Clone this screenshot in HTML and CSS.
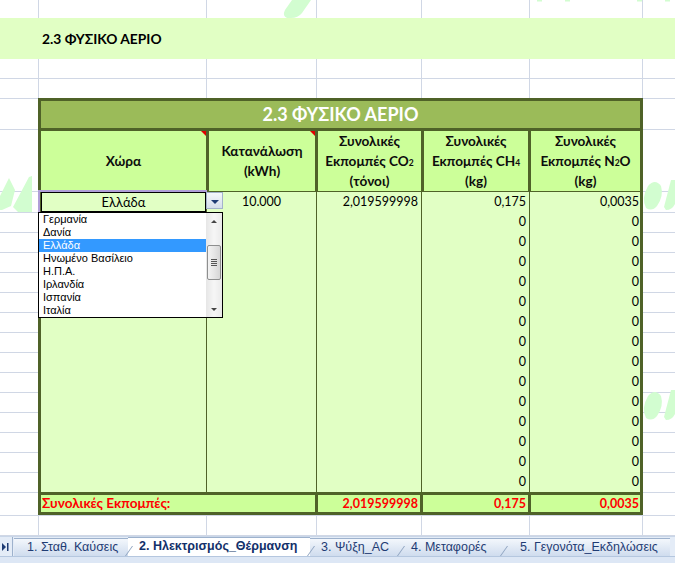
FILE: index.html
```html
<!DOCTYPE html>
<html lang="el">
<head>
<meta charset="utf-8">
<title>2.3 ΦΥΣΙΚΟ ΑΕΡΙΟ</title>
<link rel="stylesheet" href="styles.css">
</head>
<body>
<div class="sheet">
  <svg class="wm" width="675" height="536" viewBox="0 0 675 536" aria-hidden="true">
    <path d="M292 0 L311 0 L302 13 Q298 18 291 18 L287 18 Q282 16 285 10 Z"/>
    <rect x="537" y="0" width="5" height="1.5"/>
    <rect x="565" y="0" width="5" height="1.5"/>
    <rect x="637" y="0" width="5" height="1.5"/>
    <rect x="665" y="0" width="5" height="1.5"/>
    <path d="M0 196 L9 178 L15 190 L11 206 L2 210 L0 210 Z"/>
    <path d="M13 207 L29 177 L32 176 L32 212 L18 212 Z"/>
    <path d="M646 208 Q641 198 648 186 Q655 178 661 186 Q664 196 657 206 Q652 212 646 208 Z"/>
    <path d="M664 207 L671 180 L675 180 L675 204 Q672 210 666 210 Z"/>
    <path d="M646 418 Q641 408 648 396 Q655 388 661 396 Q664 406 657 416 Q652 422 646 418 Z"/>
    <path d="M664 417 L671 390 L675 390 L675 414 Q672 420 666 420 Z"/>
  </svg>

  <div class="band"><span class="band-title">2.3 ΦΥΣΙΚΟ ΑΕΡΙΟ</span></div>
  <div class="band-gap"></div>

  <div class="table-wrap">
    <div class="xtable">
      <div class="title">2.3 ΦΥΣΙΚΟ ΑΕΡΙΟ</div>
      <div class="head">
        <div class="hc note"><span>Χώρα</span></div>
        <div class="hc note"><span>Κατανάλωση<br>(kWh)</span></div>
        <div class="hc"><span>Συνολικές<br>Εκπομπές CO<sub>2</sub><br>(τόνοι)</span></div>
        <div class="hc"><span>Συνολικές<br>Εκπομπές CH<sub>4</sub><br>(kg)</span></div>
        <div class="hc"><span>Συνολικές<br>Εκπομπές N<sub>2</sub>O<br>(kg)</span></div>
      </div>
      <div class="data">
        <div class="dc dc-country"><span class="sel">Ελλάδα</span></div>
        <div class="dc dc-center"><span>10.000</span></div>
        <div class="dc"><span>2,019599998</span></div>
        <div class="dc">
          <span>0,175</span><span>0</span><span>0</span><span>0</span><span>0</span>
          <span>0</span><span>0</span><span>0</span><span>0</span><span>0</span>
          <span>0</span><span>0</span><span>0</span><span>0</span><span>0</span>
        </div>
        <div class="dc dc-last">
          <span>0,0035</span><span>0</span><span>0</span><span>0</span><span>0</span>
          <span>0</span><span>0</span><span>0</span><span>0</span><span>0</span>
          <span>0</span><span>0</span><span>0</span><span>0</span><span>0</span>
        </div>
      </div>
      <div class="total">
        <div class="tc tc-label">Συνολικές Εκπομπές:</div>
        <div class="tc">2,019599998</div>
        <div class="tc">0,175</div>
        <div class="tc tc-last">0,0035</div>
      </div>
    </div>

    <div class="sel-top"></div>
    <div class="sel-left"></div>
    <div class="dd-btn"><span class="dd-tri"></span></div>

    <div class="dd">
      <ul class="dd-items">
        <li>Γερμανία</li>
        <li>Δανία</li>
        <li class="on">Ελλάδα</li>
        <li>Ηνωμένο Βασίλειο</li>
        <li>Η.Π.Α.</li>
        <li>Ιρλανδία</li>
        <li>Ισπανία</li>
        <li>Ιταλία</li>
      </ul>
      <div class="dd-scroll">
        <div class="sb-btn"><span class="tri-up"></span></div>
        <div class="sb-track">
          <div class="sb-thumb"><i></i><i></i><i></i><i></i></div>
        </div>
        <div class="sb-btn"><span class="tri-down"></span></div>
      </div>
    </div>
  </div>
</div>

<div class="tabbar">
  <div class="tabs">
    <div class="nav">
      <svg width="9" height="8" viewBox="0 0 9 8" aria-hidden="true"><path d="M1 0 L5 4 L1 8 Z" fill="#1f3c74"/><rect x="6" y="0" width="1.5" height="8" fill="#1f3c74"/></svg>
    </div>
    <div class="tab t1">1. Σταθ. Καύσεις</div>
    <div class="tab active t2">2. Ηλεκτρισμός_Θέρμανση</div>
    <div class="tab t3">3. Ψύξη_AC</div>
    <div class="tab t4">4. Μεταφορές</div>
    <div class="tab t5">5. Γεγονότα_Εκδηλώσεις</div>
  </div>
  <div class="strip"></div>
</div>
</body>
</html>
```

FILE: styles.css
```css
* { box-sizing: border-box; }
html, body { margin: 0; padding: 0; }
body {
  width: 675px;
  height: 563px;
  overflow: hidden;
  background: #fff;
  font-family: Lato, "Noto Sans", "Liberation Sans", sans-serif;
  color: #000;
}

.sheet {
  --g: #d0d7e5;
  position: relative;
  height: 536px;
  overflow: hidden;
  padding-top: 18px;
  background:
    linear-gradient(var(--g), var(--g)) 38px 0 / 1px 100% no-repeat,
    linear-gradient(var(--g), var(--g)) 206px 0 / 1px 100% no-repeat,
    linear-gradient(var(--g), var(--g)) 316px 0 / 1px 100% no-repeat,
    linear-gradient(var(--g), var(--g)) 421px 0 / 1px 100% no-repeat,
    linear-gradient(var(--g), var(--g)) 529px 0 / 1px 100% no-repeat,
    linear-gradient(var(--g), var(--g)) 642px 0 / 1px 100% no-repeat,
    linear-gradient(var(--g), var(--g)) 0 78px / 100% 1px no-repeat,
    linear-gradient(var(--g), var(--g)) 0 98px / 100% 1px no-repeat,
    linear-gradient(var(--g), var(--g)) 0 129px / 100% 1px no-repeat,
    linear-gradient(var(--g), var(--g)) 0 191px / 100% 1px no-repeat,
    repeating-linear-gradient(180deg, var(--g) 0 1px, transparent 1px 20px) 0 212px / 100% 281px no-repeat,
    linear-gradient(var(--g), var(--g)) 0 515px / 100% 1px no-repeat,
    linear-gradient(var(--g), var(--g)) 0 535px / 100% 1px no-repeat,
    #fff;
}

.wm {
  position: absolute;
  left: 0;
  top: 0;
  z-index: 0;
  fill: #d2fdd0;
}

.band {
  position: relative;
  z-index: 1;
  height: 41px;
  background: #e1ffc4;
  display: flex;
  align-items: center;
  padding-left: 42px;
}
.band-title {
  font-weight: 700;
  font-size: 13.8px;
}
.band-gap { height: 39px; }

.table-wrap {
  position: relative;
  z-index: 1;
  margin-left: 38px;
  width: 605px;
}

.xtable {
  background: #4f6228;
  padding: 3px;
  display: flex;
  flex-direction: column;
  gap: 3px;
}

.title {
  height: 27px;
  background: #9bbb59;
  color: #fff;
  font-weight: 700;
  font-size: 18px;
  line-height: 27px;
  text-align: center;
}

.head {
  display: grid;
  grid-template-columns: 165px 106px 103px 104px 109px;
  column-gap: 3px;
  height: 58px;
}
.hc {
  position: relative;
  background: #ccff99;
  display: flex;
  align-items: center;
  justify-content: center;
  text-align: center;
  font-weight: 700;
  font-size: 13.6px;
  line-height: 20px;
  color: #0d0d0d;
}
.hc sub {
  font-size: 8.5px;
  line-height: 0;
  vertical-align: baseline;
  position: relative;
  top: 0;
}
.note::after {
  content: "";
  position: absolute;
  top: 0;
  right: 0;
  border-top: 5px solid #e00000;
  border-left: 5px solid transparent;
}

.data {
  display: grid;
  grid-template-columns: 165px 109px 104px 107px 110px;
  column-gap: 1px;
  height: 300px;
}
.dc {
  background: #e1ffc4;
  display: flex;
  flex-direction: column;
  font-size: 12.5px;
  text-align: right;
}
.dc span {
  height: 20px;
  line-height: 20px;
  padding-right: 3px;
}
.dc-last span { padding-right: 1px; }
.dc-center span { text-align: center; padding-right: 0; }
.dc-country .sel {
  text-align: center;
  padding-right: 0;
  box-shadow: inset 0 0 0 1px #000;
  font-size: 13px;
}

.total {
  display: grid;
  grid-template-columns: 274px 102px 105px 109px;
  column-gap: 3px;
  height: 17px;
}
.tc {
  background: #ccff99;
  color: #ff0000;
  font-weight: 700;
  font-size: 12.5px;
  line-height: 17px;
  text-align: right;
  padding-right: 2px;
}
.tc-last { padding-right: 1px; }
.tc-label { text-align: left; padding-left: 1px; font-size: 13.6px; }

.sel-top {
  position: absolute;
  left: 0;
  top: 92px;
  width: 169px;
  height: 2px;
  background: #b09fd8;
}
.sel-left {
  position: absolute;
  left: 0;
  top: 92px;
  width: 2px;
  height: 22px;
  background: #b09fd8;
}

.dd-btn {
  position: absolute;
  left: 168px;
  top: 94px;
  width: 17px;
  height: 17px;
  border: 1px solid #a3b3cb;
  background: linear-gradient(#f4f7fb, #d5deeb);
  display: flex;
  align-items: center;
  justify-content: center;
}
.dd-tri {
  width: 0;
  height: 0;
  border-left: 4px solid transparent;
  border-right: 4px solid transparent;
  border-top: 4px solid #1f3c74;
  margin-top: 2px;
}

.dd {
  position: absolute;
  left: 0;
  top: 114px;
  width: 185px;
  height: 106px;
  border: 1px solid #000;
  background: #fff;
  display: flex;
}
.dd-items {
  list-style: none;
  margin: 0;
  padding: 0;
  flex: 1;
  font-family: "Liberation Sans", Arial, sans-serif;
  font-size: 11px;
}
.dd-items li {
  height: 13px;
  line-height: 13px;
  padding-left: 4px;
  white-space: nowrap;
}
.dd-items li.on {
  background: #3399ff;
  color: #fff;
}
.dd-scroll {
  width: 16px;
  display: flex;
  flex-direction: column;
  background: linear-gradient(90deg, #e6e6e6, #f6f6f6 50%, #eaeaea);
}
.sb-btn {
  height: 16px;
  display: flex;
  align-items: center;
  justify-content: center;
}
.tri-up {
  border-left: 3px solid transparent;
  border-right: 3px solid transparent;
  border-bottom: 3px solid #444;
}
.tri-down {
  border-left: 3px solid transparent;
  border-right: 3px solid transparent;
  border-top: 3px solid #444;
}
.sb-track {
  flex: 1;
  padding-top: 16px;
}
.sb-thumb {
  height: 35px;
  margin: 0 1px;
  border: 1px solid #8e8f8f;
  border-radius: 2px;
  background: linear-gradient(90deg, #f3f3f3, #e6e6e6 50%, #d6d6d6);
  display: flex;
  flex-direction: column;
  align-items: center;
  justify-content: center;
  gap: 1px;
}
.sb-thumb i {
  display: block;
  width: 6px;
  height: 1px;
  background: #555;
}

.tabbar {
  height: 27px;
  display: flex;
  flex-direction: column;
  background: #e4ecf7;
}
.tabs {
  height: 20px;
  display: flex;
  align-items: flex-end;
  border-top: 1px solid #c9d6e8;
}
.nav {
  width: 13px;
  height: 19px;
  display: flex;
  align-items: center;
  justify-content: flex-start;
  border-right: 1px solid #9eb2cd;
  padding-left: 1px;
}
.tab {
  position: relative;
  flex: none;
  height: 18px;
  line-height: 17px;
  font-family: "Liberation Sans", Arial, sans-serif;
  font-size: 12.5px;
  color: #1f3c74;
  background: linear-gradient(#f3f7fc, #cfdcee);
  border-top: 1px solid #9eb2cd;
  white-space: nowrap;
}
.tab::before {
  content: "";
  position: absolute;
  left: -3px;
  bottom: 0;
  width: 1px;
  height: 10px;
  background: #8ea3c0;
  transform: skewX(-35deg);
  transform-origin: bottom;
}
.t1 { margin-left: 1px; width: 114px; padding-left: 13px; }
.t1::before { display: none; }
.active {
  background: #fff;
  color: #12306a;
  font-weight: 700;
  height: 19px;
  width: 182px;
  padding-left: 11px;
}
.t3 { width: 90px; padding-left: 11px; }
.t4 { width: 103px; padding-left: 11px; }
.t5 { width: 167px; padding-left: 17px; }
.strip {
  flex: 1;
  background: #dde7f5;
  border-top: 1px solid #b5c7df;
}
```
